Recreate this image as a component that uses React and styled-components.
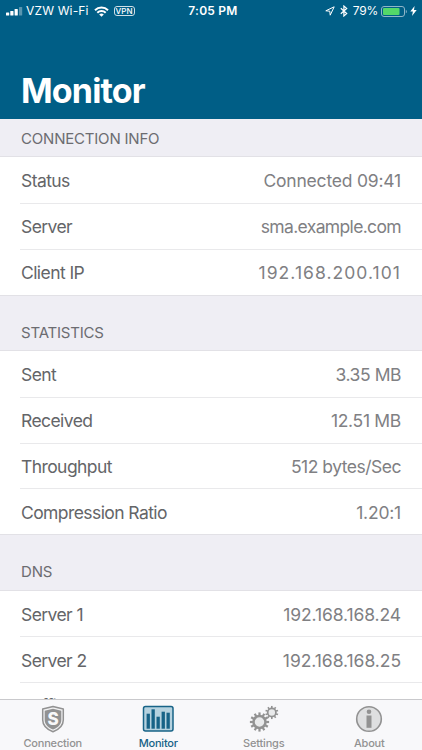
import React from 'react'
import styled, { createGlobalStyle } from 'styled-components';

const sections = [
  {
    title: 'CONNECTION INFO',
    first: true,
    rows: [
      { label: 'Status', value: 'Connected 09:41', spacing: '-.2px' },
      { label: 'Server', value: 'sma.example.com', spacing: '-.65px' },
      { label: 'Client IP', value: '192.168.200.101', spacing: '1.05px' },
    ],
  },
  {
    title: 'STATISTICS',
    rows: [
      { label: 'Sent', value: '3.35 MB', spacing: '-.45px' },
      { label: 'Received', value: '12.51 MB', spacing: '-.3px' },
      { label: 'Throughput', value: '512 bytes/Sec', spacing: '-.5px' },
      { label: 'Compression Ratio', value: '1.20:1', spacing: '-.2px' },
    ],
  },
  {
    title: 'DNS',
    rows: [
      { label: 'Server 1', value: '192.168.168.24', spacing: '-.1px' },
      { label: 'Server 2', value: '192.168.168.25', spacing: '-.05px' },
      { label: 'Suffix', value: 'example.com', spacing: '-.65px', tight: true },
    ],
  },
];

const tabs = [
  { name: 'Connection', Icon: ShieldIcon },
  { name: 'Monitor', Icon: ChartIcon, active: true },
  { name: 'Settings', Icon: GearsIcon },
  { name: 'About', Icon: InfoIcon },
];

export default function App() {
  return (
    <>
      <GlobalStyle />
      <Screen>
        <Header>
          <StatusBar>
            <Carrier>
              <SignalIcon />
              <span>VZW Wi-Fi</span>
              <WifiIcon />
              <Vpn>VPN</Vpn>
            </Carrier>
            <Clock>7:05 PM</Clock>
            <Power>
              <LocationIcon />
              <BluetoothIcon />
              <span>79%</span>
              <BatteryIcon />
              <BoltIcon />
            </Power>
          </StatusBar>
          <Title>Monitor</Title>
        </Header>
        <Content>
          {sections.map(({ title, first, rows }) => (
            <section key={title}>
              <SectionTitle $first={first}>{title}</SectionTitle>
              <List>
                {rows.map(({ label, value, spacing, tight }) => (
                  <Row key={label} $tight={tight}>
                    <Label>{label}</Label>
                    <Value $spacing={spacing}>{value}</Value>
                  </Row>
                ))}
              </List>
            </section>
          ))}
        </Content>
        <TabBar>
          {tabs.map(({ name, Icon, active }) => (
            <Tab key={name} $active={active}>
              <Icon />
              <span>{name}</span>
            </Tab>
          ))}
        </TabBar>
      </Screen>
    </>
  )
}

function SignalIcon() {
  return (
    <svg width="17" height="9" viewBox="0 0 17 9" fill="#fff">
      <rect x="0" y="5.5" width="3.2" height="3" rx=".6" />
      <rect x="4.3" y="4" width="3.2" height="4.5" rx=".6" />
      <rect x="8.6" y="2" width="3.2" height="6.5" rx=".6" />
      <rect x="13" y="0" width="3.2" height="8.5" rx=".6" opacity=".35" />
    </svg>
  )
}

function WifiIcon() {
  return (
    <svg width="15" height="11" viewBox="0 0 15 11" fill="none" stroke="#fff" strokeWidth="2">
      <path d="M1 4.2a9.2 9.2 0 0 1 13 0" />
      <path d="M3.3 6.8a6 6 0 0 1 8.4 0" />
      <path d="M7.5 10.8 5.2 8.6a3.3 3.3 0 0 1 4.6 0z" fill="#fff" stroke="none" />
    </svg>
  )
}

function LocationIcon() {
  return (
    <svg width="10" height="10" viewBox="0 0 10 10" fill="none" stroke="#fff" strokeWidth="1" strokeLinejoin="round">
      <path d="M9.2.8.8 4.8l4 .4.4 4z" />
    </svg>
  )
}

function BluetoothIcon() {
  return (
    <svg width="8" height="12" viewBox="0 0 8 12" fill="none" stroke="#fff" strokeWidth="1.2">
      <path d="M.8 3.2 6.7 8.6 3.9 11V1l2.8 2.4L.8 8.8" />
    </svg>
  )
}

function BatteryIcon() {
  return (
    <svg width="27" height="11" viewBox="0 0 27 11">
      <rect x=".5" y=".5" width="23" height="10" rx="2.5" fill="none" stroke="#8fb5c8" />
      <rect x="2" y="2" width="16.5" height="7" rx="1" fill="#53d769" />
      <path d="M24.8 3.7c1.4.5 1.4 3.1 0 3.6z" fill="#8fb5c8" />
    </svg>
  )
}

function BoltIcon() {
  return (
    <svg width="7" height="10" viewBox="0 0 7 10" fill="#fff">
      <path d="M4.6 0 .3 5.6h2.6L2 10l4.7-5.9H4z" />
    </svg>
  )
}

function ShieldIcon() {
  return (
    <svg width="24" height="28" viewBox="0 0 24 28">
      <path d="M12 1.5 22.3 4V15c0 5.4-4 9.3-10.3 11.8C5.7 24.3 1.7 20.4 1.7 15V4z" fill="#f1f1f2" stroke="#929292" strokeWidth="1.5" strokeLinejoin="round" />
      <path d="M12 3.7 20.3 5.7V15c0 4.3-3 7.3-8.3 9.6C6.7 22.3 3.7 19.3 3.7 15V5.7z" fill="#929292" />
      <Initial x="12" y="20.3">S</Initial>
    </svg>
  )
}

function ChartIcon() {
  return (
    <svg width="32" height="27" viewBox="0 0 32 27">
      <rect x="1.5" y="1.5" width="29.5" height="24.5" rx="2" fill="#b5d2df" stroke="#176387" strokeWidth="1.5" />
      <g fill="#176387">
        <rect x="4.6" y="8.7" width="3.3" height="15" />
        <rect x="9.5" y="4.3" width="3.3" height="19.4" />
        <rect x="14.5" y="11.7" width="3.3" height="12" />
        <rect x="19.6" y="6.7" width="3.3" height="17" />
        <rect x="24.5" y="7.7" width="3.3" height="16" />
      </g>
    </svg>
  )
}

function Gear({ cx, cy, r, teeth, tooth }) {
  const angles = Array.from({ length: teeth }, (_, i) => (i * 360) / teeth);
  return (
    <g transform={`translate(${cx} ${cy})`}>
      <circle r={r} fill="#e9eaeb" stroke="#929292" strokeWidth={r * 0.42} />
      {angles.map((angle) => (
        <rect key={angle} x={-tooth / 2} y={-r * 1.6} width={tooth} height={r * 0.5} fill="#929292" transform={`rotate(${angle})`} />
      ))}
    </g>
  )
}

function GearsIcon() {
  return (
    <svg width="30" height="28" viewBox="0 0 30 28">
      <Gear cx={10.5} cy={17} r={6} teeth={12} tooth={2.2} />
      <Gear cx={22.8} cy={7.5} r={4.1} teeth={10} tooth={1.6} />
    </svg>
  )
}

function InfoIcon() {
  return (
    <svg width="28" height="28" viewBox="0 0 28 28">
      <circle cx="14" cy="14" r="12.3" fill="#dedfe0" stroke="#929292" strokeWidth="1.6" />
      <circle cx="14" cy="6.8" r="2.3" fill="#929292" />
      <path d="M11.5 10.5h5v12.3h-5z" fill="#929292" />
    </svg>
  )
}

const GlobalStyle = createGlobalStyle`
  * {
    box-sizing: border-box;
  }
  body {
    margin: 0;
    font-family: Inter, "Liberation Sans", sans-serif;
  }
  svg {
    display: block;
    flex-shrink: 0;
  }
`;

const Initial = styled.text`
  font-size: 17px;
  font-weight: 800;
  text-anchor: middle;
  letter-spacing: 0;
  fill: #f8f8f9;
`;

const Screen = styled.div`
  height: 750px;
  display: flex;
  flex-direction: column;
  background: #efeef4;
  overflow: hidden;
`;

const Header = styled.header`
  height: 118.5px;
  flex-shrink: 0;
  background: #005e86;
  color: #ffffff;
`;

const StatusBar = styled.div`
  height: 22px;
  padding: 0 5px 0 6px;
  display: grid;
  grid-template-columns: 1fr auto 1fr;
  align-items: center;
  font-size: 12px;
  line-height: 22px;
`;

const Carrier = styled.div`
  display: flex;
  align-items: center;
  gap: 4px;
  letter-spacing: .15px;
  span {
    margin: 0 1px 0 -1px;
  }
`;

const Vpn = styled.small`
  width: 21px;
  height: 10px;
  margin-left: 1px;
  border: 1px solid #cfdfe7;
  border-radius: 3px;
  font-size: 8px;
  font-weight: 500;
  line-height: 8px;
  text-align: center;
  letter-spacing: .2px;
`;

const Clock = styled.span`
  margin-left: 3px;
  font-weight: 600;
  letter-spacing: .25px;
`;

const Power = styled.div`
  display: flex;
  justify-content: flex-end;
  align-items: center;
  gap: 3px;
  svg:first-child {
    margin-right: 2px;
  }
  span {
    margin-left: 2px;
    letter-spacing: -.2px;
  }
  svg:last-child {
    margin-left: -1px;
  }
`;

const Title = styled.h1`
  margin: 46px 0 0 21px;
  font-size: 34px;
  font-weight: 700;
  line-height: 46px;
  letter-spacing: -.85px;
`;

const Content = styled.main`
  flex: 1;
  min-height: 0;
  overflow: hidden;
`;

const SectionTitle = styled.h2`
  height: ${({ $first }) => ($first ? '38.8px' : '56.6px')};
  margin: 0;
  padding: 0 21px 8.5px;
  display: flex;
  align-items: flex-end;
  font-size: 15px;
  font-weight: 400;
  line-height: 20px;
  letter-spacing: -.2px;
  color: #6c6c71;
`;

const List = styled.ul`
  margin: 0;
  padding: 0 0 0 20px;
  list-style: none;
  background: #ffffff;
  box-shadow: 0 -1px #e2e1e6, 0 1px #e2e1e6;
`;

const Row = styled.li`
  height: 45.75px;
  padding: ${({ $tight }) => ($tight ? '0' : '1px')} 21px 0 1px;
  display: flex;
  justify-content: space-between;
  align-items: center;
  font-size: 17.5px;
  & + & {
    border-top: 1px solid #e9e9eb;
  }
`;

const Label = styled.span`
  color: #646568;
  letter-spacing: -.58px;
`;

const Value = styled.span`
  color: #808083;
  letter-spacing: ${({ $spacing }) => $spacing};
`;

const TabBar = styled.nav`
  height: 51px;
  flex-shrink: 0;
  display: grid;
  grid-template-columns: repeat(4, 1fr);
  background: #f8f8fa;
  border-top: 1px solid #c9c9cc;
`;

const Tab = styled.div`
  padding-top: 5px;
  display: flex;
  flex-direction: column;
  align-items: center;
  justify-content: space-between;
  font-size: 11px;
  font-weight: 500;
  line-height: 14px;
  letter-spacing: -.2px;
  color: ${({ $active }) => ($active ? '#176387' : '#929292')};
`;
